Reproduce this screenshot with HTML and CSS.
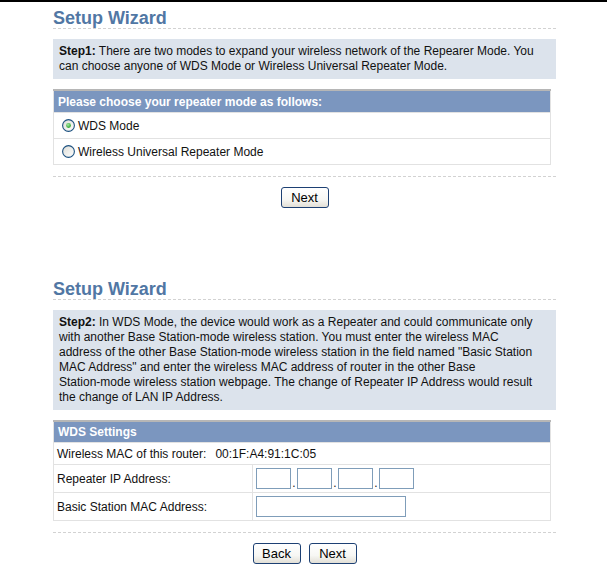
FILE: index.html
```html
<!DOCTYPE html>
<html>
<head>
<meta charset="utf-8">
<title>Setup Wizard</title>
<link rel="stylesheet" href="styles.css">
</head>
<body>
<div class="topbar"></div>
<div class="page">
  <section class="wizard">
    <h1 class="title">Setup Wizard</h1>
    <div class="note"><b>Step1:</b> There are two modes to expand your wireless network of the Repearer Mode. You<br>can choose anyone of WDS Mode or Wireless Universal Repeater Mode.</div>
    <table class="grid">
      <tr><th>Please choose your repeater mode as follows:</th></tr>
      <tr class="row-radio"><td>
        <label class="radio">
          <svg class="radio-icon" width="13" height="13" viewBox="0 0 13 13"><defs><linearGradient id="rg1" x1="0" y1="0" x2="1" y2="1"><stop offset="0" stop-color="#dcdcd6"/><stop offset="1" stop-color="#ffffff"/></linearGradient><radialGradient id="dot" cx="0.4" cy="0.35" r="0.7"><stop offset="0" stop-color="#a6e8a6"/><stop offset="1" stop-color="#21a121"/></radialGradient></defs><circle cx="6.5" cy="6.5" r="5.9" fill="url(#rg1)" stroke="#1c5180" stroke-width="1.1"/><circle cx="6.5" cy="6.5" r="2.4" fill="url(#dot)"/></svg>
          WDS Mode
        </label>
      </td></tr>
      <tr class="row-radio"><td>
        <label class="radio">
          <svg class="radio-icon" width="13" height="13" viewBox="0 0 13 13"><defs><linearGradient id="rg2" x1="0" y1="0" x2="1" y2="1"><stop offset="0" stop-color="#dcdcd6"/><stop offset="1" stop-color="#ffffff"/></linearGradient></defs><circle cx="6.5" cy="6.5" r="5.9" fill="url(#rg2)" stroke="#1c5180" stroke-width="1.1"/></svg>
          Wireless Universal Repeater Mode
        </label>
      </td></tr>
    </table>
    <div class="actions"><button class="btn" type="button">Next</button></div>
  </section>

  <section class="wizard second">
    <h1 class="title">Setup Wizard</h1>
    <div class="note"><b>Step2:</b> In WDS Mode, the device would work as a Repeater and could communicate only<br>with another Base Station-mode wireless station. You must enter the wireless MAC<br>address of the other Base Station-mode wireless station in the field named "Basic Station<br>MAC Address" and enter the wireless MAC address of router in the other Base<br>Station-mode wireless station webpage. The change of Repeater IP Address would result<br>the change of LAN IP Address.</div>
    <table class="grid">
      <tr class="head-slim"><th colspan="2">WDS Settings</th></tr>
      <tr class="row-info"><td colspan="2">Wireless MAC of this router:<span class="mac">00:1F:A4:91:1C:05</span></td></tr>
      <tr class="row-field">
        <td class="label">Repeater IP Address:</td>
        <td><div class="ipgroup"><input class="box ip" type="text"><span class="dot">.</span><input class="box ip" type="text"><span class="dot">.</span><input class="box ip" type="text"><span class="dot">.</span><input class="box ip" type="text"></div></td>
      </tr>
      <tr class="row-field">
        <td class="label">Basic Station MAC Address:</td>
        <td><input class="box macin" type="text"></td>
      </tr>
    </table>
    <div class="actions"><button class="btn" type="button">Back</button><button class="btn" type="button">Next</button></div>
  </section>
</div>
</body>
</html>
```

FILE: styles.css
```css
html, body {
  margin: 0;
  padding: 0;
  background: #ffffff;
}
body {
  font-family: "Liberation Sans", Arial, sans-serif;
  font-size: 12px;
  color: #111111;
}
.topbar {
  height: 2px;
  background: #000000;
}
.page {
  margin-left: 53px;
  width: 503px;
}
.wizard.second {
  margin-top: 71px;
}
.title {
  margin: 6px 0 0;
  padding: 0;
  font-size: 18px;
  line-height: 20px;
  font-weight: bold;
  color: #5177a4;
  border-bottom: 1px dashed #d2d2d2;
}
.note {
  margin-top: 10px;
  background: #dce3ec;
  padding: 5px 6px 5px;
  line-height: 15px;
  white-space: nowrap;
}
.note b {
  font-weight: bold;
}
.grid {
  margin-top: 10px;
  width: 498px;
  border-collapse: collapse;
}
.grid th {
  background: #7b96bf;
  color: #ffffff;
  text-align: left;
  font-weight: bold;
  height: 21px;
  padding: 0 4px;
  border-top: 2px solid #b6b6b6;
  border-left: 1px solid #e2e2e2;
  border-right: 1px solid #e2e2e2;
}
.head-slim th {
  height: 20px;
}
.grid td {
  border: 1px solid #e2e2e2;
  padding: 0 3px;
}
.row-radio td {
  height: 25px;
}
.row-info td {
  height: 21px;
}
.row-field td {
  height: 27px;
}
.grid td.label {
  width: 192px;
}
.radio {
  display: flex;
  align-items: center;
  gap: 3px;
}
.radio-icon {
  margin-left: 5px;
  flex: none;
}
.mac {
  margin-left: 9px;
}
.ipgroup {
  display: flex;
  align-items: flex-end;
}
.box {
  box-sizing: border-box;
  height: 21px;
  margin: 0;
  padding: 0;
  border: 1px solid #7f9db9;
  background: #ffffff;
  font: inherit;
  display: block;
}
.ip {
  width: 35px;
}
.dot {
  width: 6px;
  text-align: center;
  line-height: 12px;
}
.macin {
  width: 150px;
}
.actions {
  margin-top: 11px;
  border-top: 1px dashed #d2d2d2;
  padding-top: 10px;
  display: flex;
  justify-content: center;
  gap: 8px;
}
.btn {
  box-sizing: border-box;
  width: 48px;
  height: 21px;
  padding: 0;
  border: 1px solid #1d4073;
  border-radius: 3px;
  background: linear-gradient(#ffffff 0%, #f7f7f4 60%, #e2dfd6 100%);
  font-family: "Liberation Sans", Arial, sans-serif;
  font-size: 13px;
  color: #000000;
}
```
